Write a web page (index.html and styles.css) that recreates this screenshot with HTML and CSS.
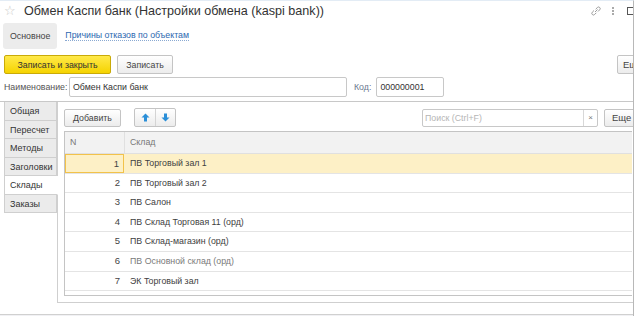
FILE: index.html
```html
<!DOCTYPE html>
<html lang="ru">

<head>
    <meta charset="UTF-8">
    <title>Обмен Каспи банк (Настройки обмена (kaspi bank))</title>
    <link rel="stylesheet" href="styles.css">
</head>

<body>
    <div class="page">
        <div class="titlebar">
            <span class="star">☆</span>
            <h1 class="title">Обмен Каспи банк (Настройки обмена (kaspi bank))</h1>
            <div class="title-icons">
                <svg width="12" height="12" viewBox="0 0 12 12" class="ico-link">
                    <path d="M5 7 L7.5 4.5 M4 5.5 L2.3 7.2 a1.6 1.6 0 0 0 2.3 2.3 L6.3 7.8 M5.7 4.2 L7.4 2.5 a1.6 1.6 0 0 1 2.3 2.3 L8 6.5" fill="none" stroke="#9a9a9a" stroke-width="1"/>
                </svg>
                <span class="dots"><i></i><i></i><i></i></span>
                <span class="sq"></span>
            </div>
        </div>

        <div class="nav">
            <span class="nav-main">Основное</span>
            <a href="javascript:;" class="nav-link">Причины отказов по объектам</a>
        </div>

        <div class="toolbar">
            <button class="btn btn-yellow">Записать и закрыть</button>
            <button class="btn btn-save">Записать</button>
            <button class="btn btn-more">Еще</button>
        </div>

        <div class="fields">
            <label class="lbl">Наименование:</label>
            <div class="input input-name">Обмен Каспи банк</div>
            <label class="lbl lbl-code">Код:</label>
            <div class="input input-code">000000001</div>
        </div>

        <div class="tabs-wrap">
            <ul class="tabs">
                <li>Общая</li>
                <li>Пересчет</li>
                <li>Методы</li>
                <li>Заголовки</li>
                <li class="active">Склады</li>
                <li>Заказы</li>
            </ul>
            <div class="panel">
                <div class="panel-bar">
                    <button class="btn btn-add">Добавить</button>
                    <div class="btn-group">
                        <span class="arrow"><svg width="9" height="9" viewBox="0 0 9 9"><path d="M4.5 0.5 L8.5 4.5 H6 V8.5 H3 V4.5 H0.5 Z" fill="#2b8fd8"/></svg></span>
                        <span class="arrow"><svg width="9" height="9" viewBox="0 0 9 9"><path d="M4.5 8.5 L8.5 4.5 H6 V0.5 H3 V4.5 H0.5 Z" fill="#2b8fd8"/></svg></span>
                    </div>
                    <div class="search">
                        <span class="search-text">Поиск (Ctrl+F)</span>
                        <span class="search-x">×</span>
                    </div>
                    <button class="btn btn-more2">Еще</button>
                </div>
                <div class="grid">
                    <div class="row head">
                        <div class="c-n">N</div>
                        <div class="c-name">Склад</div>
                    </div>
                    <div class="row selected">
                        <div class="c-n">1</div>
                        <div class="c-name">ПВ Торговый зал 1</div>
                    </div>
                    <div class="row">
                        <div class="c-n">2</div>
                        <div class="c-name">ПВ Торговый зал 2</div>
                    </div>
                    <div class="row">
                        <div class="c-n">3</div>
                        <div class="c-name">ПВ Салон</div>
                    </div>
                    <div class="row">
                        <div class="c-n">4</div>
                        <div class="c-name">ПВ Склад Торговая 11 (орд)</div>
                    </div>
                    <div class="row">
                        <div class="c-n">5</div>
                        <div class="c-name">ПВ Склад-магазин (орд)</div>
                    </div>
                    <div class="row">
                        <div class="c-n">6</div>
                        <div class="c-name dim">ПВ Основной склад (орд)</div>
                    </div>
                    <div class="row">
                        <div class="c-n">7</div>
                        <div class="c-name">ЭК Торговый зал</div>
                    </div>
                </div>
            </div>
        </div>
        <div class="footer"></div>
    </div>
</body>

</html>
```

FILE: styles.css
```css
*{
    margin: 0;
    padding: 0;
    box-sizing: border-box;
}
body{
    font-family: "Liberation Sans", Arial, sans-serif;
    font-size: 8.8px;
    color: #404040;
    background: #fff;
    overflow: hidden;
}
.page{
    width: 634px;
    height: 316px;
    border-right: 1px solid #b8b8b8;
    border-top: 1px solid #e3ecf5;
    display: flex;
    flex-direction: column;
    overflow: hidden;
}
/* шапка */
.titlebar{
    display: flex;
    align-items: center;
    height: 19px;
    padding-left: 4px;
}
.star{
    width: 18px;
    font-size: 13px;
    color: #c8c8c8;
}
.title{
    margin-left: 2px;
    font-size: 12.6px;
    font-weight: normal;
    color: #333;
}
.title-icons{
    margin-left: auto;
    display: flex;
    align-items: center;
}
.ico-link{
    margin-right: 10px;
}
.dots{
    display: flex;
    flex-direction: column;
    gap: 1px;
    margin-right: 13px;
}
.dots i{
    display: block;
    width: 2px;
    height: 2px;
    background: #aaa;
}
.sq{
    width: 6px;
    height: 8px;
    border: 1px solid #555;
    border-right: 0;
}
.nav{
    display: flex;
    align-items: center;
    height: 27px;
    margin-top: 2px;
    padding-left: 3px;
}
.nav-main{
    display: flex;
    align-items: center;
    height: 26px;
    padding: 0 7px;
    background: #ececec;
    border-radius: 3px;
    color: #444;
}
.nav-link{
    margin-left: 8px;
    color: #2d68b0;
    text-decoration: none;
    border-bottom: 1px dotted #8aa9d2;
    line-height: 10px;
}
/* кнопки */
.toolbar{
    display: flex;
    align-items: center;
    height: 19px;
    margin-top: 6px;
    padding-left: 4px;
}
.btn{
    height: 18px;
    padding: 0;
    font-family: inherit;
    font-size: 8.8px;
    color: #444;
    background: linear-gradient(#fff, #ececec);
    border: 1px solid #c4c4c4;
    border-radius: 2px;
}
.toolbar .btn{
    height: 19px;
    margin-right: 6px;
}
.btn-yellow{
    width: 107px;
    color: #333;
    background: linear-gradient(#ffe94a, #f5d300);
    border-color: #c9aa08;
}
.btn-save{
    width: 56px;
}
.toolbar .btn-more{
    margin-left: auto;
    margin-right: -14px;
    width: 30px;
    padding-left: 5px;
    text-align: left;
    font-size: 9.5px;
}
.fields{
    display: flex;
    align-items: center;
    height: 20px;
    margin-top: 3px;
    padding-left: 4px;
}
.lbl{
    width: 65px;
    color: #555;
}
.input{
    display: flex;
    align-items: center;
    height: 20px;
    padding-left: 3px;
    border: 1px solid #c8c8c8;
    border-radius: 2px;
    color: #333;
}
.input-name{
    width: 278px;
}
.lbl-code{
    width: auto;
    margin: 0 5px 0 7px;
    color: #6b7a8f;
}
.input-code{
    width: 68px;
}
/* вкладки */
.tabs-wrap{
    display: flex;
    margin-top: 4px;
    height: 202px;
    border-top: 1px solid #c8c8c8;
}
.tabs{
    width: 57px;
    padding-left: 4px;
    list-style: none;
}
.tabs li{
    height: 18.5px;
    line-height: 18px;
    padding-left: 5px;
    background: #ebebeb;
    border: 1px solid #cfcfcf;
    border-top: 0;
    color: #333;
    font-size: 9px;
}
.tabs li.active{
    background: #fff;
    border-right-color: #fff;
    margin-right: -1px;
    position: relative;
}
.panel{
    flex: 1;
    padding: 6px 1px 6px 6px;
    border-left: 1px solid #cfcfcf;
    border-bottom: 1px solid #cfcfcf;
    display: flex;
    flex-direction: column;
}
.panel-bar{
    display: flex;
    align-items: center;
    height: 19px;
}
.btn-add{
    width: 57px;
}
.btn-group{
    display: flex;
    margin-left: 13px;
    border: 1px solid #c4c4c4;
    border-radius: 2px;
    background: linear-gradient(#fff, #ececec);
}
.arrow{
    display: flex;
    align-items: center;
    justify-content: center;
    width: 20px;
    height: 17px;
}
.arrow + .arrow{
    border-left: 1px solid #d4d4d4;
}
.search{
    display: flex;
    margin-left: auto;
    width: 176px;
    height: 18px;
    border: 1px solid #c8c8c8;
    border-radius: 2px;
}
.search-text{
    flex: 1;
    padding-left: 2px;
    line-height: 16px;
    color: #b5b5b5;
}
.search-x{
    width: 14px;
    text-align: center;
    line-height: 16px;
    font-size: 8px;
    color: #777;
    border-left: 1px solid #d8d8d8;
}
.btn-more2{
    width: 32px;
    margin-left: 6px;
    margin-right: -4px;
    padding-left: 7px;
    text-align: left;
    font-size: 9.5px;
}
/* таблица */
.grid{
    flex: 1;
    margin-top: 4px;
    border: 1px solid #c4c4c4;
    border-right: 0;
    overflow: hidden;
}
.row{
    display: flex;
    height: 19.6px;
    border-bottom: 1px solid #e4e4e4;
    line-height: 18px;
}
.row.head{
    height: 22px;
    line-height: 21px;
    background: #f2f2f2;
    border-bottom-color: #e0e0e0;
    color: #777;
}
.c-n{
    width: 59px;
    padding-right: 4px;
    text-align: right;
    color: #444;
    font-size: 9.5px;
}
.head .c-n{
    text-align: left;
    padding-left: 5px;
    color: #777;
    font-size: 8.8px;
}
.c-name{
    flex: 1;
    padding-left: 6px;
}
.head .c-name{
    border-left: 1px solid #e0e0e0;
    padding-left: 5px;
}
.row.selected{
    background: #fdf0c6;
}
.selected .c-n{
    border: 1px solid #f2c24a;
    line-height: 17px;
}
.dim{
    color: #7a7a7a;
}
.footer{
    margin-top: 11px;
    flex: 1;
    border-top: 1px solid #d0d0d0;
    background: #f1f1f4;
}
```
